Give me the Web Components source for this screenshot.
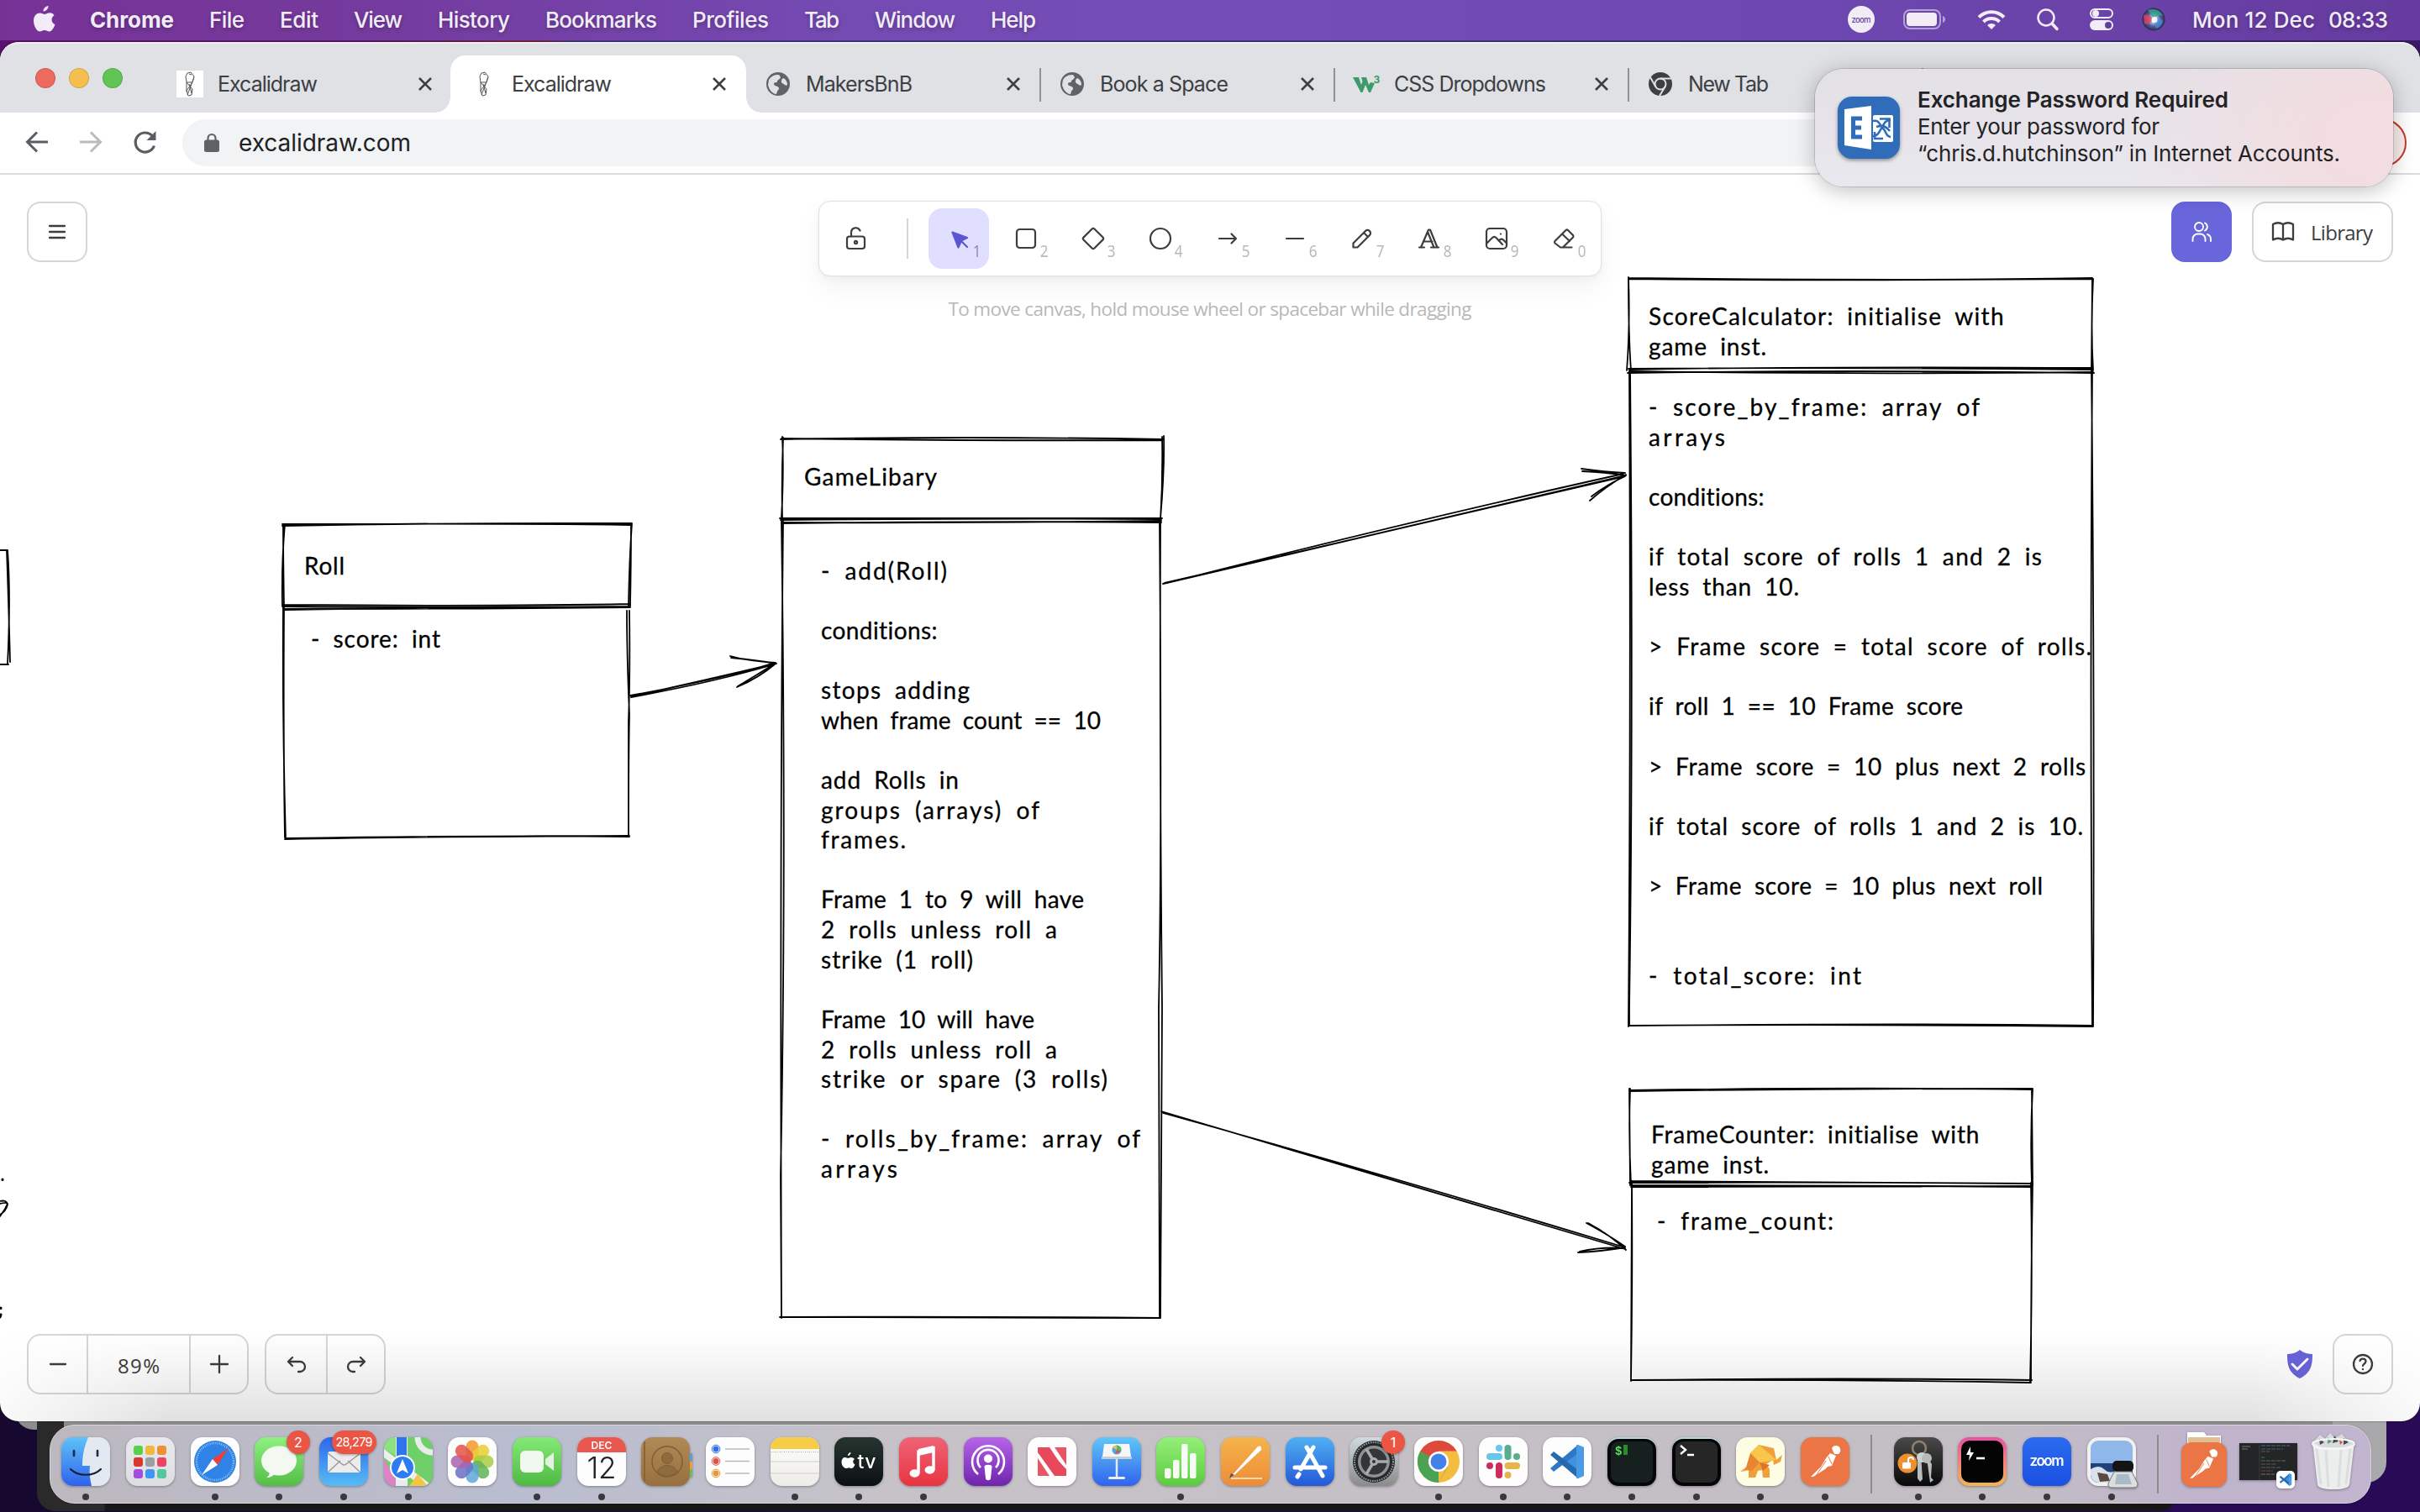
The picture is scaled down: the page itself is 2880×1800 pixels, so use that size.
<!DOCTYPE html>
<html lang="en">
<head>
<meta charset="utf-8">
<title>Excalidraw</title>
<style>
html,body{margin:0;padding:0;width:2880px;height:1800px;overflow:hidden;background:#1c0a3c;font-family:Inter,"Liberation Sans",sans-serif}
</style>
</head>
<body>
<mac-desktop></mac-desktop>
<script>
const define = (name, css, html) => customElements.define(name, class extends HTMLElement {
  constructor() {
    super();
    this.attachShadow({ mode: 'open' });
  }
  connectedCallback() {
    if (!this.shadowRoot.firstChild)
      this.shadowRoot.innerHTML = `<style>:host{display:block;box-sizing:border-box}*{box-sizing:border-box}svg{display:block;overflow:visible}${css}</style>` + (typeof html === 'function' ? html(this) : html);
  }
});

/* ---------- menu bar ---------- */
define('menu-bar', `
:host{height:48px;flex:none;background:linear-gradient(90deg,#773296 0,#753a9d 420px,#744ab3 1000px,#744eb7 1500px,#6d48b0 2150px,#663b9f 2880px)}
.bar{height:48px;display:flex;align-items:center;justify-content:space-between;padding:0 38px 2px 38px;color:#f1ecf6;font-size:26px;font-weight:500;text-shadow:0 2px 5px #0004}
.l{display:flex;align-items:center;gap:42px}.l svg{margin-right:-1px}
.r{display:flex;align-items:center}
b{font-weight:700}
.z{width:32px;height:32px;border-radius:50%;background:#f1ecf6;color:#6a45a9;display:grid;place-items:center;text-shadow:none;margin-right:1px}
`, `<div class="bar"><div class="l">
<svg width="28" height="34" viewBox="0 0 28 34" fill="#f1ecf6"><path d="M19.500 1c.2 3.200-2.800 6.600-6 6.500C13.200 4.400 16.400 1.300 19.500 1zM26.500 12.300c-4.300 2.700-3.800 9 1 10.900-1.100 3.300-3.700 8.200-6.800 8.300-2.300 0-3-1.400-5.700-1.400s-3.500 1.400-5.700 1.400C5.500 31.700 2 24.400 2 18.600c0-6 3.800-9.200 7.500-9.200 2.400 0 4.300 1.600 5.800 1.600 1.400 0 3.700-1.800 6.400-1.700 1.200 0 3.400.6 4.800 3z"/></svg>
<b><fit-line w="100">Chrome</fit-line></b><fit-line w="42">File</fit-line><fit-line w="46">Edit</fit-line><fit-line w="58">View</fit-line><fit-line w="86">History</fit-line><fit-line w="133">Bookmarks</fit-line><fit-line w="91">Profiles</fit-line><fit-line w="42">Tab</fit-line><fit-line w="96">Window</fit-line><fit-line w="54">Help</fit-line>
</div><div class="r">
<div class="z"><fit-line w="23" style="font-size:9.500px">zoom</fit-line></div>
<svg style="margin-left:33px" width="51" height="24" viewBox="0 0 51 24"><rect x="1" y="1" width="43" height="22" rx="7" fill="none" stroke="#f1ecf6" stroke-opacity=".55" stroke-width="2"/><rect x="4" y="4" width="36" height="16" rx="4" fill="#f1ecf6"/><path d="M47 8c4 1 4 7 0 8z" fill="#f1ecf6" fill-opacity=".55"/></svg>
<svg style="margin-left:37px" width="34" height="24" viewBox="0 0 34 24" fill="none" stroke="#f1ecf6" stroke-width="4"><path d="M2 9.500a21 21 0 0 1 30 0"/><path d="M7.500 15a13.500 13.500 0 0 1 19 0"/><path d="M12 19a7 7 0 0 1 10 0l-5 5z" fill="#f1ecf6" stroke="none"/></svg>
<svg style="margin-left:37px" width="26" height="26" viewBox="0 0 26 26" fill="none" stroke="#f1ecf6" stroke-linecap="round"><circle cx="11" cy="11" r="9.500" stroke-width="2.500"/><path d="m18 18 6 6.500" stroke-width="3.500"/></svg>
<svg style="margin-left:37px" width="28" height="26" viewBox="0 0 28 26"><rect x="1" y="1" width="26" height="10" rx="5" fill="none" stroke="#f1ecf6" stroke-width="2"/><circle cx="7" cy="6" r="4" fill="#f1ecf6"/><rect y="14" width="28" height="12" rx="6" fill="#f1ecf6"/><circle cx="22" cy="20" r="4" fill="#5f3f98"/></svg>
<svg style="margin-left:34px" width="28" height="28" viewBox="0 0 28 28"><defs><radialGradient id="s"><stop offset="0" stop-color="#fff"/><stop offset=".25" stop-color="#b8d8ee"/><stop offset=".6" stop-color="#5a5d9c"/><stop offset="1" stop-color="#2c2a4a"/></radialGradient></defs><circle cx="14" cy="14" r="13.500" fill="url(#s)"/><path d="M2 9c6-2 10 2 11 5-3 5-6 7-10 5z" fill="#e0415f" opacity=".8"/><path d="M7 3c8-3 16 1 18 7-5-2-9 0-11 4z" fill="#2fae8b" opacity=".75"/><path d="M14 14c3-2 8-2 11 2-1 5-4 8-8 9z" fill="#4a8de0" opacity=".75"/><circle cx="15" cy="14.500" r="3.500" fill="#fff" opacity=".9"/></svg>
<fit-line w="146" style="margin-left:32px">Mon 12 Dec</fit-line><fit-line w="71" style="margin-left:16px">08:33</fit-line>
</div></div>`);

/* ---------- browser tabs ---------- */
const ICON = {
  excali: `<svg width="32" height="32" viewBox="0 0 32 32" fill="none" stroke="#555" stroke-width="1"><path d="M13 3l4-1 4 5-2 7-7 0-1-7zM15 4l3 1M12 14l7 8-1 7-4 1-2-6 7-10M13 29l8-21M12 14l0 11M15 16l3 11"/></svg>`,
  globe: `<svg width="32" height="32" viewBox="0 0 32 32"><circle cx="16" cy="16" r="14" fill="#5f6368"/><path d="M5 11c4-6 9-6 12-6l2 3c-1 3-4 3-4 5s-4 0-4 3 6 2 6 5-2 2-2 4l-1 3c-5 0-9-6-10-11zM22 9c3 1 5 4 5 8-2 2-4-1-6-2s-1-5 1-6z" fill="#dfe1e5"/></svg>`,
  w3: `<svg width="32" height="32" viewBox="0 0 32 32"><path d="M0 8h7l3 9 1.500-4L10 8h6l3 9 2-3 5 1-5 11h-2l-4-9-3.500 9h-2z" fill="#3d9b6b"/><text x="24.500" y="14.500" font-size="12" font-weight="700" fill="#3d9b6b">3</text></svg>`,
  chrome: `<svg width="32" height="32" viewBox="0 0 32 32"><circle cx="16" cy="16" r="14" fill="#3c4043"/><g stroke="#dfe1e5" stroke-width="2" fill="none"><circle cx="16" cy="16" r="6.500"/><path d="M16 9.500h13M10.400 19.300 4 8M21.600 19.300 15 30"/></g></svg>`
};
define('browser-tab', `
:host{width:350px;height:68px;flex:none;position:relative;color:#3c4043}
.t{height:100%;display:flex;align-items:center;padding:0 21px 0 24px;font-size:25px;font-family:Inter,sans-serif}
.i{width:32px;height:32px;margin-right:17px}
.x{margin-left:auto}
:host([boxed]) .i{background:#fff}
:host([sep])::before{content:"";position:absolute;left:1px;top:15px;width:2px;height:40px;background:#8f9297}
:host([active]){width:352px;margin-right:-2px;background:#fff;border-radius:18px 18px 0 0}
:host([active]) .t{padding-right:23px}
:host([active])::before,:host([active])::after{content:"";position:absolute;bottom:0;width:18px;height:18px}
:host([active])::before{left:-18px;background:radial-gradient(circle at 0 0,#0000 17.500px,#fff 18px)}
:host([active])::after{right:-18px;background:radial-gradient(circle at 100% 0,#0000 17.500px,#fff 18px)}
`, h => `<div class="t"><div class="i">${ICON[h.getAttribute('icon')] || ''}</div><fit-line w="${h.getAttribute('w')}"><slot></slot></fit-line>${h.hasAttribute('nox') ? '' : '<svg class="x" width="18" height="18" viewBox="0 0 18 18" stroke="#3c4043" stroke-width="2.600"><path d="m2 2 14 14M16 2 2 16"/></svg>'}</div>`);

define('tab-strip', `
:host{height:84px;background:#dfe1e5;border-top:2px solid #eceef0;flex:none;border-radius:22px 22px 0 0}
.r{display:flex;align-items:flex-end;height:82px}
.lights{display:flex;gap:16px;padding:0 40px 29px 42px;width:186px;flex:none}
.lights i{width:24px;height:24px;border-radius:50%;border:1px solid #0002}
`, `<div class="r"><div class="lights"><i style="background:#ed6a5e"></i><i style="background:#f5bf4f"></i><i style="background:#61c554"></i></div>
<browser-tab icon="excali" boxed w="119">Excalidraw</browser-tab><browser-tab active icon="excali" w="119">Excalidraw</browser-tab><browser-tab icon="globe" w="127">MakersBnB</browser-tab><browser-tab sep icon="globe" w="153">Book a Space</browser-tab><browser-tab sep icon="w3" w="181">CSS Dropdowns</browser-tab><browser-tab sep nox icon="chrome" w="96">New Tab</browser-tab><browser-tab sep nox w="0"></browser-tab></div>`);

define('address-bar', `
:host{height:74px;background:#fff;border-bottom:2px solid #dadbdd;flex:none}
.r{height:72px;display:flex;align-items:center;padding:0 16px 0 28px}
.pill{flex:1;height:56px;border-radius:28px;background:#f1f3f4;display:flex;align-items:center;padding-left:26px;gap:23px;font-size:28px;color:#202124}
.upd{width:180px;height:58px;border-radius:29px;border:2px solid #c5362c;background:#fbeeed;margin-left:60px}
svg{flex:none}
`, `<div class="r">
<svg width="32" height="32" viewBox="0 0 32 32" fill="none" stroke="#5a5e63" stroke-width="3"><path d="M29 15H5M16 3.500 4.500 15 16 26.500"/></svg>
<svg style="margin-left:32px" width="32" height="32" viewBox="0 0 32 32" fill="none" stroke="#b9bbbe" stroke-width="3"><path d="M3 15h24M16 3.500 27.500 15 16 26.500"/></svg>
<svg style="margin:0 28px 0 33px" width="32" height="32" viewBox="0 0 32 32" fill="none" stroke="#5a5e63" stroke-width="3.200"><path d="M26.500 19.500A11.500 11.500 0 1 1 24 7.500l2 2"/><path d="M28.500 2v11h-11z" fill="#5a5e63" stroke="none"/></svg>
<div class="pill"><svg width="18" height="22" viewBox="0 0 18 22"><rect y="7.500" width="18" height="14.500" rx="2.500" fill="#5f6368"/><path d="M4.500 8V5.500a4.500 4.500 0 0 1 9 0V8" fill="none" stroke="#5f6368" stroke-width="2.200"/></svg><fit-line w="205">excalidraw.com</fit-line></div><div class="upd"></div></div>`);

/* ---------- drawing canvas ---------- */
define('sketch-text', `
:host{position:absolute;font-family:Virgil,Lato,"Noto Sans",sans-serif;font-size:28px;color:#000;white-space:pre;word-spacing:7px;-webkit-text-stroke:.3px #000}
div{height:35.63px;line-height:35.63px}
`, h => {
  h.style.left = (h.getAttribute('x') - 1) + 'px';
  h.style.top = (h.getAttribute('y') - 208 - 27) + 'px';
  return JSON.parse(h.getAttribute('lines')).map(l => l ? `<div><fit-line w="${l[1]}">${l[0].replace('>', '&gt;')}</fit-line></div>` : '<div></div>').join('');
});
const T = (x, y, lines) => `<sketch-text x="${x}" y="${y}" lines='${JSON.stringify(lines).replace(/>/g, '&gt;')}'></sketch-text>`;
define('sketch-canvas', `
:host{position:absolute;inset:0;overflow:hidden}
svg{position:absolute;left:0;top:0}
`, () => `<svg width="2880" height="1484" viewBox="0 208 2880 1484" fill="none" stroke="#000" stroke-width="1.800" stroke-linecap="round">
<path d="M336 626Q540 622 752 623M336 624Q600 623 751 625M339 624Q335 670 336 721M337 624Q337 660 338 723M752 623Q749 665 748 721M751 624Q751 670 750 721M336 720Q600 722 750 719M336 722Q500 724 750 722M337 725Q560 725 750 723M338 726Q600 722 749 723"/>
<path d="M337 723Q336 860 340 999M338 724Q337 880 339 997M746 727Q746 780 749 850Q748 900 748 996M749 727Q750 800 748 860L748 995M339 999Q500 996 749 995M340 998Q600 994 749 996"/>
<path d="M752 829Q830 812 923 790M750 828Q860 808 922 789M751 830Q850 812 921 791M869 781Q890 787 923 789M870 783Q900 786 924 790M877 818Q903 807 923 790M878 817Q900 804 922 790"/>
<path d="M929 523Q1150 519 1384 523M930 522Q1150 525 1383 524M931 520Q933 560 930 617M932 521Q930 570 931 618M1385 519Q1386 560 1381 617M1383 520Q1384 570 1381 620M928 617Q1150 618 1383 617M929 619Q1160 617 1382 618M931 622Q1150 623 1382 620M930 623Q1200 620 1382 622"/>
<path d="M932 620Q928 1000 930 1567M930 620Q936 1040 929 1400L930 1569M1380 621Q1383 1000 1379 1200L1380 1567M1381 620Q1380 900 1383 1200L1381 1569M928 1568Q1150 1567 1381 1569M930 1568L1380 1569"/>
<path d="M1386 694Q1650 633 1934 567M1385 695Q1680 620 1932 564M1384 695Q1660 630 1935 566M1882 558Q1910 562 1934 563M1883 561Q1910 562 1934 566M1892 596Q1910 580 1935 565M1894 591Q1912 577 1934 567"/>
<path d="M1382 1323Q1640 1400 1934 1487M1384 1325Q1640 1396 1934 1485M1888 1456Q1914 1470 1934 1484M1890 1456Q1916 1470 1935 1488M1878 1491Q1904 1490 1934 1485M1880 1490Q1906 1484 1934 1486"/>
<path d="M1938 331Q2200 334 2491 332M1938 332Q2250 335 2490 331M1938 330Q1940 390 1936 441M1938 331Q1938 400 1941 441M2490 331L2489 440M2491 332Q2488 390 2491 441M1938 439Q2200 437 2491 440M1939 440Q2180 436 2491 438M1937 444Q2200 440 2492 444M1939 442Q2200 446 2491 443"/>
<path d="M1939 442Q1941 820 1938 1222M1940 441Q1944 860 1939 1200L1939 1221M2490 441Q2487 820 2490 1222M2489 441Q2493 820 2491 1222M1938 1221Q2200 1219 2491 1222M1939 1221Q2300 1218 2490 1221"/>
<path d="M1939 1298Q2200 1294 2418 1297M1939 1299Q2180 1296 2419 1296M1940 1296Q1938 1350 1941 1411M1939 1296L1940 1411M2419 1297Q2416 1350 2418 1410M2418 1297L2419 1410M1939 1408Q2200 1407 2419 1409M1940 1406Q2150 1408 2418 1409M1940 1411Q2200 1411 2418 1413M1941 1413L2418 1412"/>
<path d="M1942 1406Q1943 1520 1941 1642M1942 1412L1941 1644M2417 1408Q2419 1520 2416 1645M2419 1409Q2417 1520 2417 1644M1941 1643Q2200 1640 2418 1643M1941 1643Q2180 1642 2417 1646"/>
<path d="M0 655h9M9 655Q13 710 9 790M8 655Q10 710 12 788M0 791h10M0 1430Q8 1428 9 1434Q7 1442 0 1446M0 1433Q8 1431 9 1433Q6 1440 0 1448"/><path d="M3 1404v.5M1 1557v.5M1 1565l-1 3" stroke-width="3"/></svg>
${T(363, 683, [['Roll', 48]])}${T(371, 770, [['- score: int', 154]])}
${T(958, 577, [['GameLibary', 158]])}
${T(978, 688.5, [['- add(Roll)', 150], 0, ['conditions:', 139], 0, ['stops adding', 177], ['when frame count == 10', 333], 0, ['add Rolls in', 164], ['groups (arrays) of', 260], ['frames.', 101], 0, ['Frame 1 to 9 will have', 313], ['2 rolls unless roll a', 281], ['strike (1 roll)', 181], 0, ['Frame 10 will have', 254], ['2 rolls unless roll a', 281], ['strike or spare (3 rolls)', 341], 0, ['- rolls_by_frame: array of', 380], ['arrays', 91]])}
${T(1963, 386, [['ScoreCalculator: initialise with', 423], ['game inst.', 140]])}
${T(1963, 494, [['- score_by_frame: array of', 394], ['arrays', 91], 0, ['conditions:', 138], 0, ['if total score of rolls 1 and 2 is', 468], ['less than 10.', 179], 0, ['> Frame score = total score of rolls.', 527], 0, ['if roll 1 == 10 Frame score', 374], 0, ['> Frame score = 10 plus next 2 rolls', 520], 0, ['if total score of rolls 1 and 2 is 10.', 517], 0, ['> Frame score = 10 plus next roll', 469], 0, 0, ['- total_score: int', 253]])}
${T(1966, 1360, [['FrameCounter: initialise with', 391], ['game inst.', 140]])}
${T(1973, 1463, [['- frame_count:', 210]])}`);

/* ---------- excalidraw chrome ---------- */
define('tool-button', `
:host{width:72px;height:72px;border-radius:16px;position:relative;display:grid;place-items:center;color:#3d3d3d}
:host([active]){background:#e0dfff;color:#5b57d1}
svg{fill:none;stroke:currentColor;stroke-width:2.200;stroke-linecap:round;stroke-linejoin:round}
span{position:absolute;right:9px;bottom:9px;font:20px/24px "Noto Sans",sans-serif;color:#b8b8b8;transform:scaleX(.85);transform-origin:right}
:host([active]) span{color:#8f8eae}
`, h => `<svg width="36" height="36" viewBox="0 0 36 36">${({
  1: '<path d="M10.500 10.500 28 17l-7 3.500-3.500 8zM21 21l7 7" fill="currentColor"/>',
  2: '<rect x="7" y="7" width="22" height="22" rx="3.500"/>',
  3: '<path d="M16.600 6.500 6.500 16.600a2 2 0 0 0 0 2.800l10.100 10.100a2 2 0 0 0 2.800 0l10.100-10.100a2 2 0 0 0 0-2.800L19.400 6.500a2 2 0 0 0-2.800 0z"/>',
  4: '<circle cx="18" cy="18" r="12"/>',
  5: '<path d="M8 18h20M22.500 12.500 28 18l-5.500 5.500"/>',
  6: '<path d="M8 18h20"/>',
  7: '<path d="M7.500 28.500v-5L22 9a3.400 3.400 0 0 1 5 5L12.500 28.500zM20 11l5 5"/>',
  8: '<path d="M6 28.500h6M20 28.500h9M11 21.500h10.500M16 10l7.500 18.500M8 28.500 17 7.500h2l8.500 21"/>',
  9: '<rect x="6" y="6" width="24" height="24" rx="4"/><path d="M23 12.500v.1M6 24l7-7c1.500-1.500 3-1.500 4.500 0l7.500 8M20.500 20.500c2.500-2.500 4-2.500 5.500-1l4 4"/>',
  0: '<path d="M27.500 28.500H14L7.500 23.500a2 2 0 0 1 0-2.500L20.500 8a2 2 0 0 1 2.500 0l6 6a2 2 0 0 1 0 2.500L17 28.500M16 12.500l9 8.500"/>'
})[h.getAttribute('n')]}</svg><span>${h.getAttribute('n')}</span>`);

define('tool-island', `
:host{width:932px;height:90px;background:#fff;border-radius:14px;border:1px solid #e2e2e4;box-shadow:0 0 2px #0001,0 14px 30px #0000000d,0 4px 10px #00000008}
.r{height:88px;display:flex;align-items:center;gap:8px;padding:0 8px}
.lk{width:72px;display:grid;place-items:center}
.sp{width:2px;height:48px;background:#d6d6d6;margin:0 16px 0 15.500px}
tool-button{flex:none}
`, `<div class="r"><div class="lk"><svg width="36" height="36" viewBox="0 0 36 36" fill="none" stroke="#3d3d3d" stroke-width="2.200" stroke-linecap="round"><rect x="7" y="15.500" width="21" height="14.500" rx="3"/><circle cx="17.500" cy="22.500" r="1.600"/><path d="M12 15.500v-5a5.500 5.500 0 0 1 10.500-2"/></svg></div><div class="sp"></div>
<tool-button n="1" active></tool-button>${[2, 3, 4, 5, 6, 7, 8, 9, 0].map(n => `<tool-button n="${n}"></tool-button>`).join('')}</div>`);

define('app-layer', `
:host{position:absolute;inset:0;display:flex;flex-direction:column;padding:31px 32px 32px;font-family:"Open Sans","Noto Sans",sans-serif;color:#3d3d3d}
.top{display:grid;grid-template-columns:1fr auto 1fr;align-items:start}
.btn{height:72px;border:2px solid #d6d6d6;border-radius:16px;display:flex;align-items:center;justify-content:center;margin-top:1px}
.sq{width:72px}
.right{display:flex;justify-content:flex-end;gap:24px}
.live{background:#6965db;border:none}
.lib{width:168px;gap:20px;font-size:24px}
.hint{align-self:center;margin-top:22px;font-size:22.500px;line-height:34px;color:#b8b8b8}
.bot{margin-top:auto;display:flex;align-items:center}
.grp{display:flex;height:72px;border:2px solid #d6d6d6;border-radius:16px}
.grp>*{display:flex;align-items:center;justify-content:center;border-left:2px solid #d6d6d6}.grp>*:first-child{border-left:0}
svg{fill:none;stroke:#3d3d3d;stroke-width:2.300;stroke-linecap:round;stroke-linejoin:round}
`, `<div class="top"><div class="btn sq"><svg width="20" height="16" viewBox="0 0 20 16"><path d="M1 1h18M1 8h18M1 15h18"/></svg></div>
<tool-island></tool-island>
<div class="right"><div class="btn sq live"><svg width="26" height="26" viewBox="0 0 26 26" style="stroke:#fff;stroke-width:1.900"><circle cx="10" cy="7" r="5"/><path d="M2.500 24v-2.500a6 6 0 0 1 6-6h3a6 6 0 0 1 6 6V24M17 2.500a5 5 0 0 1 0 9M24 24v-2.500a6 6 0 0 0-4-5.500"/></svg></div>
<div class="btn lib"><svg width="26" height="24" viewBox="0 0 26 24"><path d="M1 21.500a12 12 0 0 1 12 0 12 12 0 0 1 12 0V3a12 12 0 0 0-12 0A12 12 0 0 0 1 3zM13 3v18.500"/></svg><fit-line w="74">Library</fit-line></div></div></div>
<div class="hint"><fit-line w="623">To move canvas, hold mouse wheel or spacebar while dragging</fit-line></div>
<div class="bot"><div class="grp"><div style="width:69px"><svg width="20" height="20" viewBox="0 0 20 20"><path d="M1 10h18"/></svg></div><div style="width:122px;font-size:24px;padding-top:2px"><fit-line w="50">89%</fit-line></div><div style="width:69px"><svg width="20" height="20" viewBox="0 0 20 20"><path d="M0 10h20M10 0v20"/></svg></div></div>
<div class="grp" style="margin-left:19px"><div style="width:71px"><svg width="22" height="20" viewBox="0 0 22 20"><path d="M6 12 1 7l5-5M1 7h14a6 6 0 0 1 0 12h-2"/></svg></div><div style="width:69px"><svg width="22" height="20" viewBox="0 0 22 20"><path d="m16 12 5-5-5-5M21 7H7a6 6 0 0 0 0 12h2"/></svg></div></div>
<svg style="margin-left:auto" width="32" height="36" viewBox="0 0 32 36"><path d="M16 1c5 4 10 5 15 5 0 12-1 22-15 29C2 28 1 18 1 6c5 0 10-1 15-5z" fill="#6965db" stroke="none"/><path d="m7 18 6 6L25 12" style="stroke:#fff;stroke-width:3"/></svg>
<div class="btn sq" style="margin:0 0 0 23px"><svg width="26" height="26" viewBox="0 0 26 26"><circle cx="13" cy="13" r="11"/><path d="M13 19v.2M13 15c0-2.500 3.500-2.500 3.500-5.500 0-3.500-6-4-7-.500"/></svg></div></div>`);

define('browser-window', `
:host{height:1642px;flex:none;margin-top:2px;border-radius:22px;overflow:hidden;background:#fff;display:flex;flex-direction:column;position:relative;z-index:1;box-shadow:0 0 2px #000a}
.page{flex:1;position:relative;overflow:hidden}
.shade{position:absolute;left:0;right:0;bottom:0;height:110px;background:linear-gradient(#0000,#00000006 25%,#0000001e);-webkit-mask:linear-gradient(90deg,#0003,#000 200px,#000 2680px,#0003);mask:linear-gradient(90deg,#0003,#000 200px,#000 2680px,#0003)}
`, `<tab-strip></tab-strip><address-bar></address-bar><div class="page"><sketch-canvas></sketch-canvas><app-layer></app-layer><div class="shade"></div></div>`);

/* ---------- notification ---------- */
define('mac-notification', `
:host{position:absolute;left:2160px;top:82px;width:688px;height:140px;z-index:3;border-radius:34px;background:radial-gradient(ellipse 300px 220px at 97% 60%,#f2dde0 20%,#f2dde000),linear-gradient(#e3e0e6,#e9e8ee);box-shadow:0 0 0 1px #0002,0 4px 26px #0004}
.r{display:flex;align-items:center;height:100%;padding:0 0 2px 27px;gap:21px;font-size:26px;line-height:32px;color:#232225}
.i{filter:drop-shadow(0 2px 2px #0006);margin-top:2px}
b{font-weight:600;display:block;height:32px}p{margin:0;height:32px}
`, `<div class="r"><svg class="i" width="74" height="74" viewBox="0 0 74 74"><rect width="74" height="74" rx="17" fill="#2f6dba"/><path d="M8 15 40 11v52L8 58z" fill="#fff"/><path d="M29 26H18.500v22H29M18.500 37H28" stroke="#2f6dba" stroke-width="5" fill="none"/><rect x="42" y="22" width="24" height="32" rx="2" fill="#fff"/><path d="M42 29c8-2 8 6 12 9s3 10 9 10M63 28c-8 0-8 6-11 10s-4 9-10 9M50 26.500h11.500V37M44 42v8h10M46 36c7-2 10-2 16 5" stroke="#2f6dba" stroke-width="2.600" fill="none"/></svg>
<div><b><fit-line w="370">Exchange Password Required</fit-line></b><p><fit-line w="288">Enter your password for</fit-line></p><p><fit-line w="503">“chris.d.hutchinson” in Internet Accounts.</fit-line></p></div></div>`);

/* ---------- dock ---------- */
const g = (id, a, b) => `<defs><linearGradient id="${id}" x2="0" y2="1"><stop stop-color="${a}"/><stop offset="1" stop-color="${b}"/></linearGradient></defs><rect width="58" height="58" rx="13.500" fill="url(#${id})"/>`;
const w = '<rect width="58" height="58" rx="13.500" fill="#fdfdfd"/>';
const clip = '<clipPath id="c"><rect width="58" height="58" rx="13.500"/></clipPath>';
const postman = '<path d="M37 13a5.500 5.500 0 1 1 8 7l-5 0zM35 19l7 3-5 12-5 1-3 3-14 9-3 0 12-12 6-10z" fill="#fff"/><path d="m30 28-12 18M33 23l4 9" stroke="#ec7545" stroke-width="1"/>';
const vs = '<path d="M42 9l7 3v34l-7 3-20-20z" fill="#3f93de"/><path d="M42 9 9 37l4 4 29-22z" fill="#2f77c4"/><path d="M42 49 9 21l4-4 29 22z" fill="#2769b0"/><path d="M40 9l9 3v34l-9 3z" fill="#4a9be6"/>';
const APPS = {
finder: clip + `<g clip-path="url(#c)"><rect width="58" height="58" fill="#e3e9f0"/><defs><linearGradient id="f" x2="0" y2="1"><stop stop-color="#5ec2f8"/><stop offset="1" stop-color="#2f62ec"/></linearGradient></defs><path d="M0 0h32c-5 12-7 22-7 34h9c-1 8 0 16 2 24H0z" fill="url(#f)"/></g><path d="M15 16v6M43 16v6" stroke="#1d2a4a" stroke-width="2.600" stroke-linecap="round"/><path d="M11 38c9 9 27 9 36 0" stroke="#16203a" stroke-width="2.200" fill="none" stroke-linecap="round"/>`,
launch: g('l', '#e8eaee', '#dcdee2') + ['#5bcf4c', '#f1b93c', '#ee9134', '#d9382e', '#9b9fa4', '#ec4561', '#a34ee0', '#3c98f4', '#54c6a0'].map((c, i) => `<rect x="${9 + i % 3 * 14}" y="${10 + (i / 3 | 0) * 14}" width="11" height="11" rx="3" fill="${c}"/>`).join(''),
safari: w + '<circle cx="29" cy="29" r="25" fill="#2f83e6"/><circle cx="29" cy="29" r="22" fill="none" stroke="#fff9" stroke-width="2.500" stroke-dasharray=".8 1.500"/><path d="M45 13 32 33l-6-7z" fill="#ee4036"/><path d="M13 45 26 26l6 7z" fill="#fff"/>',
messages: g('m', '#8ef080', '#55bd47') + '<ellipse cx="29" cy="28" rx="21" ry="17.500" fill="#f3f9f1"/><path d="M18 40c0 4-1 6-4 8 5 0 8-2 10-5z" fill="#f3f9f1"/>',
mail: g('a', '#3065ea', '#55bdf6') + '<rect x="10" y="17" width="39" height="25" rx="3" fill="#ececec"/><path d="m10 19 17 13q2.500 2 5 0L49 19M11 41l14-13M48 41 34 28" fill="none" stroke="#999" stroke-width="1.400"/>',
maps: clip + '<g clip-path="url(#c)"><rect width="58" height="58" fill="#6fcf68"/><path d="M0 0h14v22L0 14z" fill="#8be07f"/><path d="M0 14 58 58H44L0 24z" fill="#eee"/><path d="M0 25 18 58H0z" fill="#dd82c6"/><path d="m30 58 10-14 12 14z" fill="#f4c542"/><path d="M14 0h14v58H14z" fill="#e9ecef"/><path d="M15 0h12v30H15z" fill="#2f73ec"/><circle cx="58" cy="0" r="18" fill="none" stroke="#e8ecea" stroke-width="7"/></g><circle cx="22" cy="36" r="14" fill="#2f7bf2" stroke="#fff" stroke-width="2"/><path d="m22 26 7 17-7-4-7 4z" fill="#fff"/>',
photos: w + ['#f39a2d', '#e9cf33', '#a9cc42', '#63b35a', '#5fa6d8', '#6c72c4', '#ac63b0', '#e4534a'].map((c, i) => `<rect x="21.500" y="3.500" width="15" height="24" rx="7.500" fill="${c}" opacity=".86" transform="rotate(${i * 45} 29 29)"/>`).join(''),
facetime: g('t', '#84ea75', '#4fb943') + '<rect x="9" y="16" width="28" height="26" rx="6" fill="#f1f8ef"/><path d="m39 26 10-8v22l-10-8z" fill="#e5f2e2"/>',
cal: w + '<path d="M0 18V13.500A13.500 13.500 0 0 1 13.500 0h31A13.500 13.500 0 0 1 58 13.500V18z" fill="#e8584e"/><text x="29" y="14" text-anchor="middle" font-size="12" font-weight="600" fill="#fff">DEC</text><text x="29" y="49" text-anchor="middle" font-size="35" font-weight="300" fill="#222" textLength="35">12</text>',
contacts: '<path d="M54 19h7v10h-7z" fill="#5aa0d8"/><path d="M54 29h7v9h-7z" fill="#eb9d45"/><path d="M54 38h7v9h-7z" fill="#65c25b"/>' + g('o', '#b08a55', '#98703f') + '<path d="M4 5v48" stroke="#8a6435" stroke-width="2"/><g fill="#8d6b3e" stroke="#7f5f34"><circle cx="31" cy="29" r="18" fill="none" stroke-width="1.500"/><circle cx="31" cy="25" r="6.500"/><path d="M19 41c4-10 20-10 24 0-6 7-18 7-24 0z"/></g>',
remind: w + [['#2f6fed', 14], ['#e2503f', 28.5], ['#eb9634', 43]].map(([c, y]) => `<circle cx="12" cy="${y}" r="3.400" fill="${c}"/><circle cx="12" cy="${y}" r="4.800" fill="none" stroke="${c}"/><path d="M23 ${y}h29" stroke="#b5b5b5" stroke-width="1.400"/>`).join(''),
notes: g('n', '#fdfdfb', '#eeede8') + '<path d="M0 14V13.500A13.500 13.500 0 0 1 13.500 0h31A13.500 13.500 0 0 1 58 13.500V14z" fill="#f7cd47"/><path d="M1 17.500h56" stroke="#aaa" stroke-dasharray="1 1.500"/><path d="M0 29h58M0 43h58" stroke="#cfcec9"/>',
tv: g('v', '#26352f', '#0b1012') + '<path d="M19.500 18c.2 2-1.600 4-3.600 4 0-2 1.800-4 3.600-4zM24 26c-2.600 1.600-2.200 5.200.5 6.400-1 2.600-2.400 4.600-4 4.600s-1.800-.8-3.300-.8-1.700.8-3.200.8C11 37 8.500 33 8.500 29.500c0-3.500 2-5.500 4.300-5.500 1.400 0 2.500.9 3.400.9s2-1 3.700-1c1.500 0 3 .7 4.100 2.100z" fill="#fff"/><text x="27.500" y="37" font-size="23" font-weight="500" fill="#fff" textLength="22">tv</text>',
music: g('u', '#ee6477', '#e93440') + '<path d="M23 43V17l18-4v26" stroke="#fff" stroke-width="3.500" fill="none"/><path d="M23 14l18-4v8l-18 4z" fill="#fff"/><ellipse cx="18.500" cy="43" rx="6" ry="4.700" fill="#fff"/><ellipse cx="36.500" cy="39" rx="6" ry="4.700" fill="#fff"/>',
pod: g('p', '#b665e8', '#6e25ab') + '<g fill="none" stroke="#fff" stroke-width="2.600"><path d="M17 44a19 19 0 1 1 24 0"/><path d="M20 36a12.500 12.500 0 1 1 18 0"/></g><circle cx="29" cy="25.500" r="5" fill="#fff"/><path d="M24.500 35c0-3 9-3 9 0l-1.500 14c-.500 3-5.500 3-6 0z" fill="#fff"/>',
news: w + '<path d="M12 12h9l25 26v8h-9L12 18z" fill="#e7495b"/><path d="M12 12h14l20 30v4H32L12 18z" fill="#e7495b"/><path d="M32 12h14v21zM12 25v21h14z" fill="#ea5565"/>',
key: g('k', '#5fc6fa', '#3163ec') + '<path d="M14 8h30l2 15H12z" fill="#f6f6f6"/><path d="M11 23h36v3H11z" fill="#c9ced6"/><path d="M29 26v22" stroke="#e6e9ee" stroke-width="2.500"/><rect x="19" y="47" width="20" height="3" rx="1.500" fill="#eceff3"/><circle cx="29" cy="15" r="5.500" fill="#4aa8e8"/><path d="M29 15V9.500a5.500 5.500 0 0 1 5 7.500z" fill="#57b957"/><path d="M29 15l5 2-7 3z" fill="#e94f4f"/><path d="M29 15 24 12a6 6 0 0 1 5-2.500z" fill="#f0c340"/>',
num: g('b', '#95ef79', '#5bcb40') + '<g fill="#f6fbf4"><rect x="10" y="37" width="7.500" height="12" rx="2"/><rect x="20" y="27" width="7.500" height="22" rx="2"/><rect x="30" y="8" width="7.500" height="41" rx="2"/><rect x="40" y="19" width="7.500" height="30" rx="2"/></g>',
pages: g('g', '#f5b44b', '#ee8b38') + '<path d="M12 49h37" stroke="#fbd9a8" stroke-width="2"/><path d="M10 49 44 11q5-2 4 4L16 45z" fill="#fff"/><path d="m10 49 2-6 4 2z" fill="#555"/>',
store: g('e', '#4fb0f3', '#2458d8') + '<g stroke="#fff" stroke-width="5" stroke-linecap="round"><path d="M33 12 18 38M25 12l19 34M11 36h36M16 44l-2 3"/></g>',
prefs: g('q', '#cfdae0', '#8b8b89') + '<circle cx="29" cy="29" r="25" fill="#262829"/><circle cx="29" cy="29" r="23" fill="none" stroke="#9aa0a2" stroke-width="2" stroke-dasharray="1.500 1.300"/><circle cx="29" cy="29" r="19" fill="#8e9294"/><circle cx="29" cy="29" r="15.500" fill="#333638"/><path d="M29 29h17M29 29l-9-15M29 29l-9 15" stroke="#a8acae" stroke-width="3.500"/><circle cx="29" cy="29" r="5" fill="#a8acae"/><circle cx="29" cy="29" r="2" fill="#333"/>',
chrome: w + '<circle cx="29" cy="29" r="25" fill="#f3bd3f"/><path d="M7.300 16.500A25 25 0 0 0 29 54L40 35 29 29 18 35z" fill="#4aa355"/><path d="M29 54 40 34 50.700 16.500 29 16.500V29z" fill="#f3bd3f"/><path d="M7.300 16.500 18 35l11-6V16.500h21.700A25 25 0 0 0 7.300 16.500z" fill="#dc4a3d"/><path d="M7.300 16.500 18 35 29 29z" fill="#4aa355"/><circle cx="29" cy="29" r="12" fill="#fff"/><circle cx="29" cy="29" r="9.500" fill="#4480ea"/>',
slack: w + '<rect x="20" y="9" width="8" height="8" rx="4" fill="#68c5ec"/><rect x="9" y="19" width="19" height="8" rx="4" fill="#68c5ec"/><rect x="30.500" y="9" width="8" height="18" rx="4" fill="#53b08a"/><rect x="41" y="19" width="8" height="8" rx="4" fill="#53b08a"/><rect x="30.500" y="30" width="18.500" height="8" rx="4" fill="#e5b44b"/><rect x="30.500" y="41" width="8" height="8" rx="4" fill="#e5b44b"/><rect x="20" y="30" width="8" height="19" rx="4" fill="#cf2c5b"/><rect x="9" y="30" width="8" height="8" rx="4" fill="#cf2c5b"/>',
vscode: w + vs,
iterm: '<rect width="58" height="58" rx="13.500" fill="#b9d6dc"/><rect y="2" width="58" height="56" rx="13" fill="#060808"/><rect x="4" y="5" width="50" height="49" rx="9" fill="#15201f"/><text x="9" y="21" font-size="14" font-weight="700" fill="#5ae05a" font-family="Liberation Mono">$</text><path d="M19 9h5v12h-5z" fill="#2d8a2d"/>',
term: '<rect width="58" height="58" rx="13.500" fill="#b9d6dc"/><rect y="2" width="58" height="56" rx="13" fill="#050505"/><rect x="4" y="5" width="50" height="49" rx="9" fill="#262626"/><path d="m10 10 6 5-6 5M18 21h8" stroke="#fff" stroke-width="2.400" fill="none"/>',
ele: '<rect width="58" height="58" rx="13.500" fill="#fdfde4"/><path d="M17 19 27 9l18 4 3 14 7-6-2 8-8 4-1-6-8 5 4 6 0 10h-8l-1-9-5 1-3 8h-8V35l-3 5-7 1 9-7 4-9z" fill="#f0a03a"/><path d="m27 9 13 11 8 7-20 3-11-11z" fill="#f7c64b"/><path d="m17 19 11 11-9 10-8-1z" fill="#e98430"/><path d="M28 30l12 3-8 7z" fill="#e0702c"/>',
postman: '<rect width="58" height="58" rx="13.500" fill="#ec7545"/>' + postman,
keychain: g('h', '#4a4a4a', '#080808') + '<circle cx="30" cy="13" r="8" fill="none" stroke="#8f8468" stroke-width="2.500"/><path d="M28 20l4 0 2 30-3 3-3-4zM37 20l8 12-1 16 3 3-4 3-3-22z" fill="#b9bdbf"/><circle cx="33" cy="24" r="6" fill="#cfd2d3"/><circle cx="39" cy="25" r="6" fill="#b6babc"/><circle cx="16" cy="31" r="11.500" fill="#f08f2e"/><rect x="10" y="30" width="10" height="7.500" rx="1" fill="#fff"/><path d="M17 30v-3a3 3 0 0 1 6 0" stroke="#fff" stroke-width="2" fill="none"/>',
hyper: g('y', '#ec4fa5', '#f4b452') + '<rect x="4" y="4" width="50" height="50" rx="10" fill="#040404"/><path d="m15 11-5 10h4l-1 7 6-10h-4z" fill="#fff"/><path d="M22 25h10" stroke="#fff" stroke-width="2.600"/>',
zoom: g('z', '#2b6bf0', '#1c50e2') + '<text x="29" y="34" text-anchor="middle" font-size="17" font-weight="600" fill="#fff" textLength="41">zoom</text>',
preview: '<rect width="58" height="58" rx="13.500" fill="#f1f1f1"/><rect x="4" y="4" width="50" height="50" rx="9" fill="#8fb7ea"/><path d="M4 31h50v14a9 9 0 0 1-9 9H13a9 9 0 0 1-9-9z" fill="#22417c"/><path d="M4 38q10-6 16 0t14 2v14H13a9 9 0 0 1-9-9z" fill="#d9e1ea"/><path d="m12 42 12 2 3 8-12 1z" fill="#5a4a42"/><rect x="30" y="28" width="25" height="13" rx="5" fill="#141414"/><path d="M32 41h21l7 14q0 5-5 5H30q-6 0-5-5z" fill="#dcdfe1" stroke="#777"/><path d="M35 44h14l4 12H33z" fill="#8aa2b5" opacity=".6"/>',
stack: '<path d="M9-6h20l3 4h17v20H9z" fill="#fff"/><path d="M10 0h38v16H10z" fill="#e0bd92"/><rect x="2" y="6" width="54" height="53" rx="12" fill="#ec7545"/><g transform="translate(1 5) scale(.93)">' + postman + '</g>',
mini: '<rect x="-6" y="7" width="69" height="44" fill="#242526"/><path d="M18 9v42" stroke="#3c3c3c"/>' + [10, 14, 17, 24, 28, 32, 36, 40, 44].map((y, i) => `<path d="M20 ${y}h${[34, 26, 10, 4, 30, 18, 24, 14, 16][i]}" stroke="${['#6b8ba4', '#487ba8', '#88745a', '#777', '#5d8f7b', '#8d6a5a', '#66788c', '#9a5048', '#999'][i]}" stroke-opacity=".7" stroke-width="1.200" stroke-dasharray="5 1"/>`).join('') + '<path d="M-3 11h10M-3 14h7" stroke="#777"/><rect x="38" y="40" width="22" height="21" rx="5" fill="#fff"/><g transform="translate(38.500 40) scale(.36)">' + vs + '</g>',
trash: '<path d="M4 5h50l-6 51q-1 6-19 6t-19-6z" fill="#eceded"/><path d="M9 14l5 42M49 14l-5 42M20 15l3 44M38 15l-3 44" stroke="#dcddde" stroke-width="3"/><path d="m5 6 8-9 6 5 6-7 6 6 8-5 5 6 8 2 2 4-12 4H14z" fill="#d9dcdc"/><path d="m12 2 6 4-5 3zM30-2l5 7-7 2zM41 1l6 5-6 3z" fill="#46494d"/><path d="m22 0 5 5-5 3z" fill="#4fa77f"/><path d="m36 3 4 3-3 3z" fill="#c9584a"/><ellipse cx="29" cy="8" rx="25" ry="6" fill="none" stroke="#f7f7f7" stroke-width="2"/>'
};
define('dock-app', `
:host{width:76.67px;flex:none;display:flex;flex-direction:column;align-items:center;padding-top:14px;position:relative}
svg{filter:drop-shadow(0 1px 1.500px #0005);font-family:Inter,sans-serif;flex:none}
:host([open])::after{content:"";width:8px;height:8px;border-radius:50%;background:#39383c;margin-top:9px}
.b{position:absolute;top:6px;left:47px;height:28px;min-width:28px;border-radius:14px;background:#ea5544;color:#fff;font-size:16px;line-height:28px;text-align:center;padding:0 4px;box-shadow:0 1px 3px #0005}
:host([badge="28,279"]) .b{left:24px;width:53px;font-size:14.500px}
`, h => `<svg width="58" height="58" viewBox="0 0 58 58">${APPS[h.getAttribute('app')]}</svg>${h.hasAttribute('badge') ? `<div class="b"><fit-line w="${h.getAttribute('badge').length > 2 ? 44 : 0}">${h.getAttribute('badge')}</fit-line></div>` : ''}`);

define('mac-dock', `
:host{margin:4px 58px 0 58.500px;height:94px;flex:none;border-radius:30px;position:relative;z-index:1;display:flex;padding:0 0 0 4.500px;border:1.500px solid #d8d6da;background:linear-gradient(90deg,#bdb8bf 0,#b9bdd0 560px,#c6c2c8 1000px,#c2bec4 2300px,#c0b4cc 2560px,#c1b5cf);box-shadow:0 0 1px #0008}
i{width:2px;height:70px;margin:11px 16px 0 16px;background:#8d8a90;flex:none}
`, () => {
  const A = 'finder* launch safari* messages*2 mail*28,279 maps* photos facetime* cal* contacts remind notes* tv* music* pod news key num* pages store prefs.1 chrome* slack* vscode* iterm* term* ele* postman* | keychain* hyper* zoom* preview* | stack mini trash';
  return A.split(' ').map(s => {
    if (s === '|') return '<i></i>';
    const [, n, o, b] = s.match(/^(\w+)([*.]?)(.*)$/);
    return `<dock-app app="${n}"${o === '*' ? ' open' : ''}${b ? ` badge="${b}"` : ''}></dock-app>`;
  }).join('');
});

define('mac-desktop', `
:host{width:2880px;height:1800px;position:relative;overflow:hidden;display:flex;flex-direction:column;background:linear-gradient(90deg,#16082f,#280a56)}
.back{position:absolute}
`, `<div class="back" style="left:0;top:48px;width:2880px;height:60px;background:linear-gradient(90deg,#5a1270,#5d1470 440px,#7c2545 640px,#43378c 680px,#3c2f7e 2500px,#3b1866)"></div>
<div class="back" style="left:18px;top:1640px;width:600px;height:62px;border-radius:0 0 0 22px;background:#8c8d8c"></div>
<div class="back" style="left:600px;top:1640px;width:2240px;height:125px;border-radius:0 0 24px 0;background:linear-gradient(90deg,#8c8d8c,#949494 1600px,#a9a8ab)"></div>
<div class="back" style="left:44px;top:1690px;width:2548px;height:109px;border-radius:0 0 22px 22px;background:linear-gradient(90deg,#2a2a2b 0,#2a2a2b 80px,#171717 81px)"></div>
<div class="back" style="left:76px;top:1690px;width:2700px;height:40px;background:#8d8e8d"></div>
<menu-bar></menu-bar><browser-window></browser-window><mac-dock></mac-dock><mac-notification></mac-notification>`);

/* One line of text that spreads its letters to the width given in w. */
customElements.define('fit-line', class extends HTMLElement {
  constructor() {
    super();
    this.attachShadow({ mode: 'open' }).innerHTML = '<style>:host{display:inline-block;white-space:pre}</style><span><slot></slot></span>';
  }
  connectedCallback() {
    const target = +this.getAttribute('w');
    let text = this.textContent;
    const slot = this.querySelector('slot');
    if (slot) text = slot.assignedNodes().map(n => n.textContent).join('');
    if (!target || text.length < 2) return;
    const span = this.shadowRoot.querySelector('span');
    const natural = span.getBoundingClientRect().width;
    const ls = (target - natural) / (text.length - 1);
    span.style.letterSpacing = ls + 'px';
    this.style.width = target + 'px';
  }
});
</script>
</body>
</html>
